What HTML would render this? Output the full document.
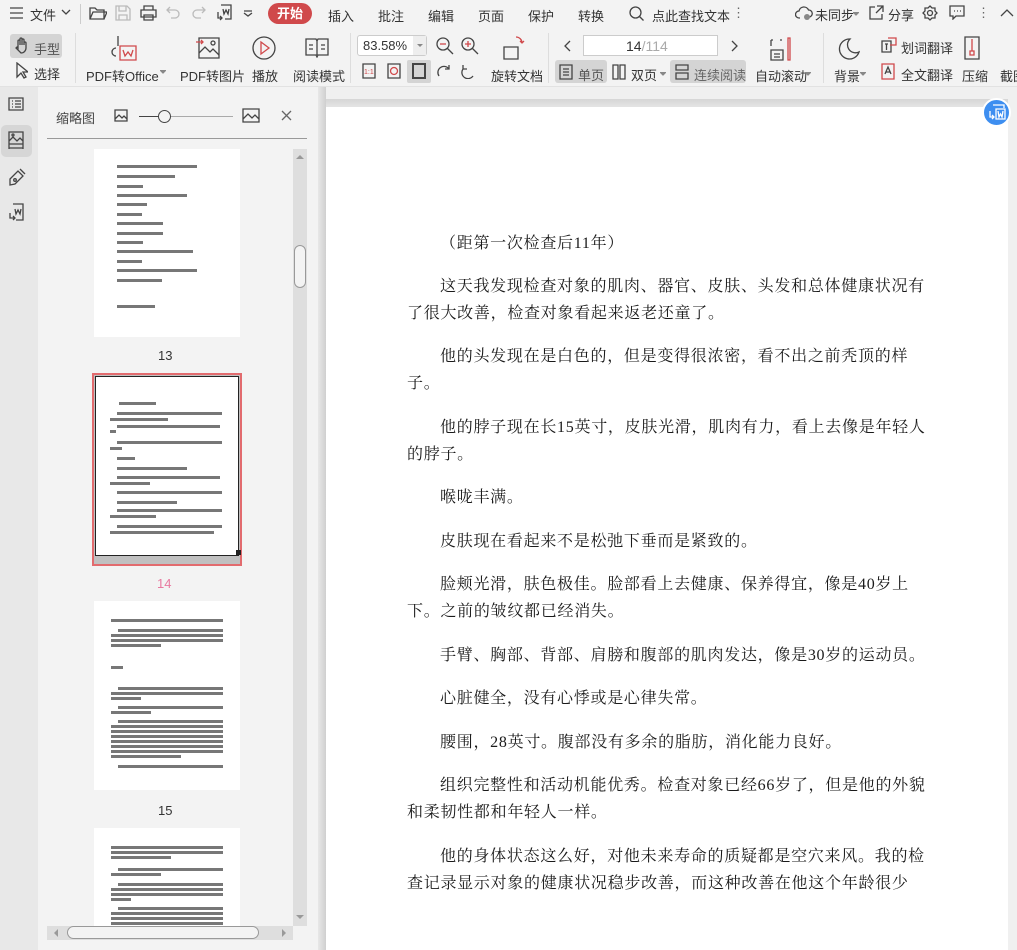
<!DOCTYPE html>
<html><head><meta charset="utf-8">
<style>
*{margin:0;padding:0;box-sizing:border-box}
body{width:1017px;height:950px;overflow:hidden;background:#f3f3f3;font-family:"Liberation Sans","Noto Sans CJK SC",sans-serif;color:#333;position:relative}
.a{position:absolute}
.t{font-size:13px;white-space:nowrap;color:#333}
.ic{position:absolute;fill:none;stroke:#444;stroke-width:1.3}
.bar{position:absolute;height:3px;background:#777}
.pl{position:absolute;left:407px;font-family:"Liberation Serif","Noto Serif CJK SC",serif;font-size:16px;letter-spacing:0.72px;color:#1a1a1a;white-space:nowrap;line-height:20px}
</style></head><body>
<!-- title row -->
<div class="a" style="left:0;top:0;width:1017px;height:28px;background:#f3f3f3"></div>
<svg class="ic" style="left:9px;top:6px" width="16" height="14"><path d="M1 2h13M1 7h13M1 12h13"/></svg>
<div class="a t" style="left:30px;top:5px">文件</div>
<svg class="ic" style="left:61px;top:9px" width="10" height="6"><path d="M1 1l4 4 4-4"/></svg>
<div class="a" style="left:80px;top:4px;width:1px;height:20px;background:#ccc"></div>
<svg class="ic" style="left:89px;top:5px" width="18" height="16"><path d="M1 3h5l2 2h7v9H1zM1 14l3-7h14l-3 7"/></svg>
<svg class="ic" style="left:115px;top:5px;stroke:#bbb" width="16" height="16"><path d="M1 1h11l3 3v11H1zM4 1v5h7V1M4 15v-5h8v5"/></svg>
<svg class="ic" style="left:140px;top:5px" width="17" height="16"><path d="M4 5V1h9v4M1 5h15v7H1zM4 10h9v5H4z"/></svg>
<svg class="ic" style="left:166px;top:6px;stroke:#bbb" width="14" height="14"><path d="M4 1L1 4l3 3M1 4h8a4 4 0 010 8H5"/></svg>
<svg class="ic" style="left:192px;top:6px;stroke:#bbb" width="14" height="14"><path d="M10 1l3 3-3 3M13 4H5a4 4 0 000 8h4"/></svg>
<svg class="ic" style="left:215px;top:4px" width="18" height="19"><path d="M6 1h10v14H10M3 8v6h4M5 12l2 2-2 2M8 5l1 5 2-4 2 4 1-5"/></svg>
<svg class="ic" style="left:243px;top:10px" width="10" height="7"><path d="M1 1h8M1 3l4 3 4-3"/></svg>
<div class="a" style="left:268px;top:3px;width:44px;height:21px;border-radius:11px;background:#d0494b;color:#fff;font-size:13px;text-align:center;line-height:21px;font-weight:bold">开始</div>
<div class="a t" style="left:328px;top:6px">插入</div>
<div class="a t" style="left:378px;top:6px">批注</div>
<div class="a t" style="left:428px;top:6px">编辑</div>
<div class="a t" style="left:478px;top:6px">页面</div>
<div class="a t" style="left:528px;top:6px">保护</div>
<div class="a t" style="left:578px;top:6px">转换</div>
<svg class="ic" style="left:629px;top:6px" width="16" height="16"><circle cx="6.5" cy="6.5" r="5.5"/><path d="M10.5 10.5l4 4"/></svg>
<div class="a t" style="left:652px;top:6px">点此查找文本</div>
<div class="a t" style="left:732px;top:5px;color:#666">⋮</div>
<svg class="ic" style="left:795px;top:5px" width="18" height="16"><path d="M5 13H4a3.5 3.5 0 010-7 5 5 0 019.5-1A3.5 3.5 0 0114 12"/><circle cx="12" cy="12" r="3" fill="#888" stroke="none"/></svg>
<div class="a t" style="left:815px;top:5px">未同步</div>
<svg class="ic" style="left:853px;top:12px;stroke:#888" width="6" height="4"><path d="M0 0h6L3 3z" fill="#888"/></svg>
<svg class="ic" style="left:869px;top:5px" width="15" height="15"><path d="M6 2H1v12h12V9M8 1h6v6M14 1L7 8"/></svg>
<div class="a t" style="left:888px;top:5px">分享</div>
<svg class="ic" style="left:922px;top:5px" width="16" height="16"><circle cx="8" cy="8" r="2.5"/><path d="M8 1l2 2 3 0 0 3 2 2-2 2 0 3-3 0-2 2-2-2-3 0 0-3-2-2 2-2 0-3 3 0z"/></svg>
<svg class="ic" style="left:949px;top:5px" width="16" height="15"><path d="M1 1h14v10H7l-3 3v-3H1zM5 6h1M8 6h1M11 6h1"/></svg>
<div class="a t" style="left:977px;top:5px;color:#666">⋮</div>
<svg class="ic" style="left:1000px;top:8px" width="14" height="9"><path d="M1 8l6-6 6 6"/></svg>

<!-- toolbar row -->
<div class="a" style="left:10px;top:34px;width:52px;height:24px;background:#d4d4d4;border-radius:3px"></div>
<svg class="ic" style="left:14px;top:37px" width="16" height="17"><path d="M4 9V4a1 1 0 012 0v4V2a1 1 0 012 0v6V3a1 1 0 012 0v5-2a1 1 0 012 0v5a5 5 0 01-5 5H7l-5-5 1-1 1 1z"/></svg>
<div class="a t" style="left:34px;top:39px;color:#555">手型</div>
<svg class="ic" style="left:16px;top:62px" width="12" height="17"><path d="M1 1v14l4-4 3 5 2-1-3-5h5z"/></svg>
<div class="a t" style="left:34px;top:64px">选择</div>
<div class="a" style="left:75px;top:33px;width:1px;height:50px;background:#ddd"></div>
<svg class="ic" style="left:110px;top:34px" width="28" height="28"><path d="M8 2v10M6 14a4 4 0 000 8" /><path d="M10 12h16v14H10z" stroke="#d0494b"/><path d="M13 16l2 6 3-4 3 4 2-6" stroke="#d0494b"/></svg>
<div class="a t" style="left:86px;top:66px">PDF转Office</div>
<svg class="ic" style="left:160px;top:70px;stroke:#888" width="6" height="4"><path d="M0 0h6L3 3z" fill="#888"/></svg>
<svg class="ic" style="left:196px;top:37px" width="24" height="22"><path d="M3 1h20v20H3z"/><path d="M3 16l6-6 5 5 3-3 6 6"/><circle cx="17" cy="6" r="2"/><path d="M0 5h7M5 3l2 2-2 2" stroke="#d0494b"/></svg>
<div class="a t" style="left:180px;top:66px">PDF转图片</div>
<svg class="ic" style="left:252px;top:36px" width="24" height="24"><circle cx="12" cy="12" r="11"/><path d="M9 6l8 6-8 6z" stroke="#d0494b"/></svg>
<div class="a t" style="left:252px;top:66px">播放</div>
<svg class="ic" style="left:305px;top:38px" width="24" height="20"><path d="M1 1h10l1 2 1-2h10v16H13l-1 2-1-2H1zM12 3v14M4 7h4M4 11h4M16 7h4M16 11h4" /></svg>
<div class="a t" style="left:293px;top:66px">阅读模式</div>
<div class="a" style="left:350px;top:33px;width:1px;height:50px;background:#ddd"></div>
<div class="a" style="left:357px;top:35px;width:70px;height:21px;border:1px solid #ccc;background:#fff;border-radius:3px"></div>
<div class="a t" style="left:363px;top:38px">83.58%</div>
<div class="a" style="left:413px;top:36px;width:13px;height:19px;background:#eee"></div>
<svg class="ic" style="left:417px;top:44px" width="6" height="4"><path d="M0 0h6L3 3z" fill="#888" stroke="none"/></svg>
<svg class="ic" style="left:436px;top:37px" width="18" height="18"><circle cx="7" cy="7" r="6"/><path d="M11 11l6 6"/><path d="M4 7h6" stroke="#d0494b"/></svg>
<svg class="ic" style="left:461px;top:37px" width="18" height="18"><circle cx="7" cy="7" r="6"/><path d="M11 11l6 6"/><path d="M4 7h6M7 4v6" stroke="#d0494b"/></svg>
<svg class="ic" style="left:362px;top:63px" width="14" height="16"><path d="M1 1h12v14H1z"/><text x="2" y="11" font-size="7" fill="#d0494b" stroke="none">1:1</text></svg>
<svg class="ic" style="left:387px;top:63px" width="14" height="16"><path d="M1 1h12v14H1z"/><circle cx="7" cy="8" r="3.5" stroke="#d0494b"/></svg>
<div class="a" style="left:407px;top:60px;width:24px;height:23px;background:#d4d4d4;border-radius:2px"></div>
<svg class="ic" style="left:412px;top:63px" width="14" height="16"><path d="M1 1h12v14H1z" stroke-width="2"/></svg>
<svg class="ic" style="left:436px;top:64px" width="15" height="15"><path d="M3 12A6 6 0 1113 5M13 1v4H9"/></svg>
<svg class="ic" style="left:461px;top:64px" width="15" height="15"><path d="M12 12A6 6 0 112 5M2 1v4h4"/></svg>
<svg class="ic" style="left:502px;top:35px" width="26" height="26"><path d="M2 12h14v12H2z"/><path d="M14 2a6 6 0 016 6M18 6l2 2 2-2" stroke="#d0494b"/></svg>
<div class="a t" style="left:491px;top:66px">旋转文档</div>
<div class="a" style="left:548px;top:33px;width:1px;height:50px;background:#ddd"></div>
<svg class="ic" style="left:564px;top:40px" width="8" height="12"><path d="M6 1L1 6l5 5"/></svg>
<div class="a" style="left:583px;top:35px;width:135px;height:21px;border:1px solid #ccc;background:#fff"></div>
<div class="a" style="left:626px;top:38px;font-size:14px;color:#333">14<span style="color:#aaa">/114</span></div>
<svg class="ic" style="left:730px;top:40px" width="8" height="12"><path d="M2 1l5 5-5 5"/></svg>
<div class="a" style="left:555px;top:60px;width:52px;height:23px;background:#d4d4d4;border-radius:3px"></div>
<svg class="ic" style="left:559px;top:64px" width="14" height="16"><path d="M1 1h12v14H1zM4 5h6M4 8h6M4 11h6"/></svg>
<div class="a t" style="left:578px;top:65px;color:#555">单页</div>
<svg class="ic" style="left:612px;top:64px" width="14" height="16"><path d="M1 1h5v14H1zM8 1h5v14H8z"/></svg>
<div class="a t" style="left:631px;top:65px">双页</div>
<svg class="ic" style="left:660px;top:72px;stroke:#888" width="6" height="4"><path d="M0 0h6L3 3z" fill="#888"/></svg>
<div class="a" style="left:670px;top:60px;width:76px;height:23px;background:#d4d4d4;border-radius:3px"></div>
<svg class="ic" style="left:675px;top:64px" width="14" height="16"><path d="M1 1h12v5H1zM1 9h12v6H1z"/></svg>
<div class="a t" style="left:694px;top:65px;color:#666">连续阅读</div>
<svg class="ic" style="left:770px;top:37px" width="22" height="24"><path d="M1 3h2M1 3v6M12 3h-2M1 13h12v10H1zM4 17h6M4 20h6"/><path d="M18 1v22h2V1z" stroke="#d0494b"/></svg>
<div class="a t" style="left:755px;top:66px">自动滚动</div>
<svg class="ic" style="left:805px;top:72px;stroke:#888" width="6" height="4"><path d="M0 0h6L3 3z" fill="#888"/></svg>
<div class="a" style="left:823px;top:33px;width:1px;height:50px;background:#ddd"></div>
<svg class="ic" style="left:838px;top:38px" width="22" height="22"><path d="M12 1a10 10 0 1 0 9 13A8 8 0 0 1 12 1z"/></svg>
<div class="a t" style="left:834px;top:66px">背景</div>
<svg class="ic" style="left:860px;top:72px;stroke:#888" width="6" height="4"><path d="M0 0h6L3 3z" fill="#888"/></svg>
<svg class="ic" style="left:881px;top:37px" width="16" height="16"><path d="M1 4h9v11H1zM4 7h3M5.5 7v6"/><path d="M7 1h8v7H9" stroke="#d0494b"/></svg>
<div class="a t" style="left:901px;top:38px">划词翻译</div>
<svg class="ic" style="left:881px;top:63px" width="16" height="17"><path d="M1 1h12v15H1z" stroke="#d0494b"/><path d="M4 11l3-7 3 7M5 9h4"/></svg>
<div class="a t" style="left:901px;top:65px">全文翻译</div>
<svg class="ic" style="left:963px;top:36px" width="18" height="24"><path d="M2 1h14v22H2z"/><path d="M9 3v12M7 15h4v4H7z" stroke="#d0494b"/></svg>
<div class="a t" style="left:962px;top:66px">压缩</div>
<div class="a t" style="left:1000px;top:66px">截图</div>

<div class="a" style="left:0;top:86px;width:1017px;height:1px;background:#e2e2e2"></div>

<!-- left rail -->
<div class="a" style="left:0;top:87px;width:38px;height:863px;background:#e8e8e8"></div>
<svg class="ic" style="left:8px;top:97px" width="16" height="14"><path d="M1 1h14v12H1zM4 4h1M7 4h6M4 7h1M7 7h6M4 10h1M7 10h6"/></svg>
<div class="a" style="left:1px;top:125px;width:31px;height:32px;background:#d6d6d6;border-radius:5px"></div>
<svg class="ic" style="left:8px;top:131px" width="16" height="19"><path d="M1 1h14v12H1zM1 10l4-4 4 4 3-3 3 3M1 17h14M1 13v5M15 13v5"/><circle cx="5" cy="4" r="1"/></svg>
<svg class="ic" style="left:8px;top:168px" width="18" height="18"><path d="M2 11l8-8 5 5-8 8-5 1z"/><circle cx="7" cy="12" r="1.3"/><path d="M12 1l5 5"/></svg>
<svg class="ic" style="left:8px;top:203px" width="16" height="19"><path d="M5 1h10v16H8M2 10v5h5M5 13l2 2-2 2M7 6l1 5 2-4 2 4 1-5"/></svg>

<!-- sidebar panel -->
<div class="a" style="left:38px;top:87px;width:280px;height:863px;background:#f3f3f3"></div>
<div class="a" style="left:56px;top:108px;font-size:13px;color:#444">缩略图</div>
<svg class="ic" style="left:114px;top:109px" width="14" height="13"><path d="M1 1h12v11H1zM1 10l4-4 3 3 2-2 3 3"/></svg>
<div class="a" style="left:139px;top:116px;width:94px;height:1px;background:#aaa"></div>
<div class="a" style="left:139px;top:116px;width:20px;height:1px;background:#444"></div>
<div class="a" style="left:158px;top:110px;width:13px;height:13px;border:1px solid #444;border-radius:50%;background:#f3f3f3"></div>
<svg class="ic" style="left:242px;top:108px" width="18" height="15"><path d="M1 1h16v13H1zM1 11l5-5 4 4 3-3 4 4"/></svg>
<svg class="ic" style="left:281px;top:110px;stroke:#666" width="11" height="11"><path d="M1 1l9 9M10 1l-9 9"/></svg>
<div class="a" style="left:47px;top:138px;width:260px;height:1px;background:#999"></div>

<!-- thumbs -->
<div class="a" style="left:94px;top:149px;width:146px;height:188px;background:#fff"></div>
<div class="a t" style="left:158px;top:348px;font-size:13px">13</div>
<div class="a" style="left:92px;top:373px;width:150px;height:193px;border:2px solid #e26b6e;background:#c0c0c0"></div>
<div class="a" style="left:95px;top:376px;width:144px;height:180px;border:1px solid #222;background:#fff"></div>
<div class="a" style="left:236px;top:550px;width:5px;height:5px;background:#222"></div>
<div class="a" style="left:157px;top:576px;font-size:13px;color:#e87aa0">14</div>
<div class="a" style="left:94px;top:601px;width:146px;height:189px;background:#fff"></div>
<div class="a t" style="left:158px;top:803px;font-size:13px">15</div>
<div class="a" style="left:94px;top:828px;width:146px;height:98px;background:#fff"></div>

<div class="bar" style="left:117px;top:165px;width:80px"></div>
<div class="bar" style="left:117px;top:175px;width:58px"></div>
<div class="bar" style="left:117px;top:185px;width:26px"></div>
<div class="bar" style="left:117px;top:194px;width:70px"></div>
<div class="bar" style="left:117px;top:203px;width:30px"></div>
<div class="bar" style="left:117px;top:213px;width:25px"></div>
<div class="bar" style="left:117px;top:222px;width:46px"></div>
<div class="bar" style="left:117px;top:232px;width:46px"></div>
<div class="bar" style="left:117px;top:241px;width:26px"></div>
<div class="bar" style="left:117px;top:250px;width:76px"></div>
<div class="bar" style="left:117px;top:260px;width:25px"></div>
<div class="bar" style="left:117px;top:269px;width:80px"></div>
<div class="bar" style="left:117px;top:279px;width:45px"></div>
<div class="bar" style="left:117px;top:305px;width:38px"></div>
<div class="bar" style="left:119px;top:402px;width:37px"></div>
<div class="bar" style="left:117px;top:412px;width:105px"></div>
<div class="bar" style="left:110px;top:418px;width:58px"></div>
<div class="bar" style="left:117px;top:425px;width:103px"></div>
<div class="bar" style="left:110px;top:430px;width:6px"></div>
<div class="bar" style="left:117px;top:441px;width:105px"></div>
<div class="bar" style="left:110px;top:447px;width:12px"></div>
<div class="bar" style="left:117px;top:457px;width:18px"></div>
<div class="bar" style="left:117px;top:467px;width:70px"></div>
<div class="bar" style="left:117px;top:476px;width:103px"></div>
<div class="bar" style="left:110px;top:482px;width:40px"></div>
<div class="bar" style="left:117px;top:491px;width:105px"></div>
<div class="bar" style="left:117px;top:501px;width:60px"></div>
<div class="bar" style="left:117px;top:509px;width:105px"></div>
<div class="bar" style="left:110px;top:515px;width:46px"></div>
<div class="bar" style="left:117px;top:525px;width:105px"></div>
<div class="bar" style="left:110px;top:531px;width:104px"></div>
<div class="bar" style="left:111px;top:619px;width:112px"></div>
<div class="bar" style="left:118px;top:629px;width:105px"></div>
<div class="bar" style="left:111px;top:634px;width:112px"></div>
<div class="bar" style="left:111px;top:639px;width:112px"></div>
<div class="bar" style="left:111px;top:644px;width:50px"></div>
<div class="bar" style="left:111px;top:666px;width:12px"></div>
<div class="bar" style="left:118px;top:687px;width:105px"></div>
<div class="bar" style="left:111px;top:692px;width:112px"></div>
<div class="bar" style="left:111px;top:697px;width:30px"></div>
<div class="bar" style="left:118px;top:706px;width:105px"></div>
<div class="bar" style="left:111px;top:711px;width:40px"></div>
<div class="bar" style="left:118px;top:720px;width:105px"></div>
<div class="bar" style="left:111px;top:725px;width:112px"></div>
<div class="bar" style="left:111px;top:730px;width:112px"></div>
<div class="bar" style="left:111px;top:735px;width:112px"></div>
<div class="bar" style="left:111px;top:740px;width:112px"></div>
<div class="bar" style="left:111px;top:745px;width:112px"></div>
<div class="bar" style="left:111px;top:750px;width:112px"></div>
<div class="bar" style="left:111px;top:755px;width:70px"></div>
<div class="bar" style="left:118px;top:765px;width:105px"></div>
<div class="bar" style="left:111px;top:846px;width:112px"></div>
<div class="bar" style="left:111px;top:851px;width:112px"></div>
<div class="bar" style="left:111px;top:856px;width:60px"></div>
<div class="bar" style="left:118px;top:868px;width:105px"></div>
<div class="bar" style="left:111px;top:873px;width:50px"></div>
<div class="bar" style="left:118px;top:883px;width:105px"></div>
<div class="bar" style="left:111px;top:888px;width:112px"></div>
<div class="bar" style="left:111px;top:893px;width:112px"></div>
<div class="bar" style="left:111px;top:898px;width:20px"></div>
<div class="bar" style="left:118px;top:907px;width:105px"></div>
<div class="bar" style="left:111px;top:912px;width:112px"></div>
<div class="bar" style="left:111px;top:917px;width:112px"></div>
<div class="bar" style="left:111px;top:922px;width:112px"></div>

<!-- sidebar scrollbars -->
<div class="a" style="left:293px;top:149px;width:14px;height:777px;background:#dedede"></div>
<div class="a" style="left:296px;top:155px;width:0;height:0;border-left:4px solid transparent;border-right:4px solid transparent;border-bottom:4px solid #999"></div>
<div class="a" style="left:294px;top:245px;width:12px;height:43px;border:1px solid #999;border-radius:6px;background:#f3f3f3"></div>
<div class="a" style="left:296px;top:915px;width:0;height:0;border-left:4px solid transparent;border-right:4px solid transparent;border-top:4px solid #999"></div>
<div class="a" style="left:47px;top:926px;width:246px;height:14px;background:#dedede"></div>
<div class="a" style="left:54px;top:929px;width:0;height:0;border-top:4px solid transparent;border-bottom:4px solid transparent;border-right:4px solid #999"></div>
<div class="a" style="left:67px;top:926px;width:192px;height:13px;border:1px solid #999;border-radius:7px;background:#f3f3f3"></div>
<div class="a" style="left:282px;top:929px;width:0;height:0;border-top:4px solid transparent;border-bottom:4px solid transparent;border-left:4px solid #999"></div>

<!-- document area -->
<div class="a" style="left:318px;top:87px;width:699px;height:863px;background:#e0e0e0"></div>
<div class="a" style="left:318px;top:87px;width:8px;height:863px;background:linear-gradient(90deg,#e8e8e8,#cfcfcf)"></div>
<div class="a" style="left:326px;top:87px;width:682px;height:12px;background:#f0f0f0"></div>
<div class="a" style="left:326px;top:99px;width:682px;height:8px;background:linear-gradient(#d6d6d6,#e4e4e4)"></div>
<div class="a" style="left:326px;top:107px;width:682px;height:843px;background:#fff"></div>
<div class="a" style="left:1008px;top:87px;width:9px;height:863px;background:#f0f0f0"></div>
<div class="a" style="left:982px;top:98px;width:29px;height:29px;border-radius:50%;background:#3d8ef0;border:2px solid #fff"></div>
<svg class="a" style="left:988px;top:104px" width="18" height="17" fill="none" stroke="#fff" stroke-width="1.3"><path d="M5 1h11v3M8 5h9v10H8zM10 7l1 6 1.5-3 1.5 3 1-6M2 7v6h4M4 11l2 2-2 2"/></svg>

<div class="pl" style="top:234px;left:440px">（距第一次检查后11年）</div>
<div class="pl" style="top:277px;left:440px">这天我发现检查对象的肌肉、器官、皮肤、头发和总体健康状况有</div>
<div class="pl" style="top:304px">了很大改善，检查对象看起来返老还童了。</div>
<div class="pl" style="top:347px;left:440px">他的头发现在是白色的，但是变得很浓密，看不出之前秃顶的样</div>
<div class="pl" style="top:374px">子。</div>
<div class="pl" style="top:418px;left:440px">他的脖子现在长15英寸，皮肤光滑，肌肉有力，看上去像是年轻人</div>
<div class="pl" style="top:445px">的脖子。</div>
<div class="pl" style="top:488px;left:440px">喉咙丰满。</div>
<div class="pl" style="top:532px;left:440px">皮肤现在看起来不是松弛下垂而是紧致的。</div>
<div class="pl" style="top:575px;left:440px">脸颊光滑，肤色极佳。脸部看上去健康、保养得宜，像是40岁上</div>
<div class="pl" style="top:602px">下。之前的皱纹都已经消失。</div>
<div class="pl" style="top:646px;left:440px">手臂、胸部、背部、肩膀和腹部的肌肉发达，像是30岁的运动员。</div>
<div class="pl" style="top:689px;left:440px">心脏健全，没有心悸或是心律失常。</div>
<div class="pl" style="top:733px;left:440px">腰围，28英寸。腹部没有多余的脂肪，消化能力良好。</div>
<div class="pl" style="top:776px;left:440px">组织完整性和活动机能优秀。检查对象已经66岁了，但是他的外貌</div>
<div class="pl" style="top:803px">和柔韧性都和年轻人一样。</div>
<div class="pl" style="top:847px;left:440px">他的身体状态这么好，对他未来寿命的质疑都是空穴来风。我的检</div>
<div class="pl" style="top:874px">查记录显示对象的健康状况稳步改善，而这种改善在他这个年龄很少</div>
</body></html>
